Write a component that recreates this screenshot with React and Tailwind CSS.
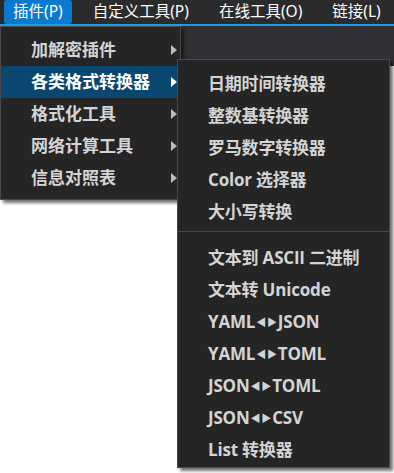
import React from "react";

const topMenus = [
  { label: "插件(P)", active: true },
  { label: "自定义工具(P)" },
  { label: "在线工具(O)" },
  { label: "链接(L)" },
];

const pluginItems = [
  { label: "加解密插件" },
  { label: "各类格式转换器", active: true },
  { label: "格式化工具" },
  { label: "网络计算工具" },
  { label: "信息对照表" },
];

const converterGroups = [
  ["日期时间转换器", "整数基转换器", "罗马数字转换器", "Color 选择器", "大小写转换"],
  [
    "文本到 ASCII 二进制",
    "文本转 Unicode",
    ["YAML", "JSON"],
    ["YAML", "TOML"],
    ["JSON", "TOML"],
    ["JSON", "CSV"],
    "List 转换器",
  ],
];

const font = { fontFamily: '"Open Sans", "Noto Sans CJK SC", sans-serif' };

const Arrow = ({ active }) => (
  <svg width="6" height="10" viewBox="0 0 6 10" className="absolute right-[3px] top-[11px]">
    <path d="M0 0 L6 5 L0 10 Z" fill={active ? "#ffffff" : "#bdbdbd"} />
  </svg>
);

// small ◂▸ pair between two format names
const Swap = () => (
  <span className="inline-flex items-center gap-[1px] mx-[1px] text-[10px] leading-none">
    <span>◀</span>
    <span>▶</span>
  </span>
);

const App = () => {
  return (
    <div className="relative w-[394px] h-[473px] bg-white overflow-hidden" style={font}>
      {/* Menu bar */}
      <div className="h-[26px] bg-[#2b2b2d] border-b-2 border-[#1a9fe3] flex items-stretch pl-[4px] gap-[12px]">
        {topMenus.map((m) => (
          <div
            key={m.label}
            className={
              "px-[9px] flex items-center text-[15.5px] leading-none text-white " +
              (m.active ? "bg-[#0a7ad1] rounded-[3px]" : "")
            }
            style={{ fontFamily: '"Noto Sans", "Noto Sans CJK SC", sans-serif' }}
          >
            {m.label}
          </div>
        ))}
      </div>
      <div className="h-[40px] bg-[#303034]" />

      {/* Plugin dropdown */}
      <div className="absolute left-0 top-[26px] w-[181px] bg-[#252526] border border-[#4a4a4a] pt-[7px] pb-[5px] shadow-[3px_3px_3px_rgba(0,0,0,0.55)]">
        {pluginItems.map((it) => (
          <div
            key={it.label}
            className={
              "relative h-[32px] flex items-center pl-[30px] text-[17px] font-bold " +
              (it.active ? "bg-[#094771] text-white" : "text-[#d4d4d4]")
            }
          >
            {it.label}
            <Arrow active={it.active} />
          </div>
        ))}
      </div>

      {/* Converter submenu */}
      <div className="absolute left-[177px] top-[59px] w-[213px] bg-[#252526] border border-[#4a4a4a] pt-[8px] pb-[1px] shadow-[3px_3px_3px_rgba(0,0,0,0.55)]">
        {converterGroups.map((group, gi) => (
          <div key={gi}>
            {gi > 0 && <div className="mt-[3px] mb-[10px] h-px bg-[#4a4a4a]" />}
            {group.map((label) => (
              <div
                key={Array.isArray(label) ? label.join("-") : label}
                className="h-[32px] flex items-center pl-[30px] text-[17px] font-bold text-[#d4d4d4] whitespace-nowrap tracking-[-0.2px]"
              >
                {Array.isArray(label) ? (
                  <>
                    {label[0]}
                    <Swap />
                    {label[1]}
                  </>
                ) : (
                  label
                )}
              </div>
            ))}
          </div>
        ))}
      </div>
    </div>
  );
};

export default App;
